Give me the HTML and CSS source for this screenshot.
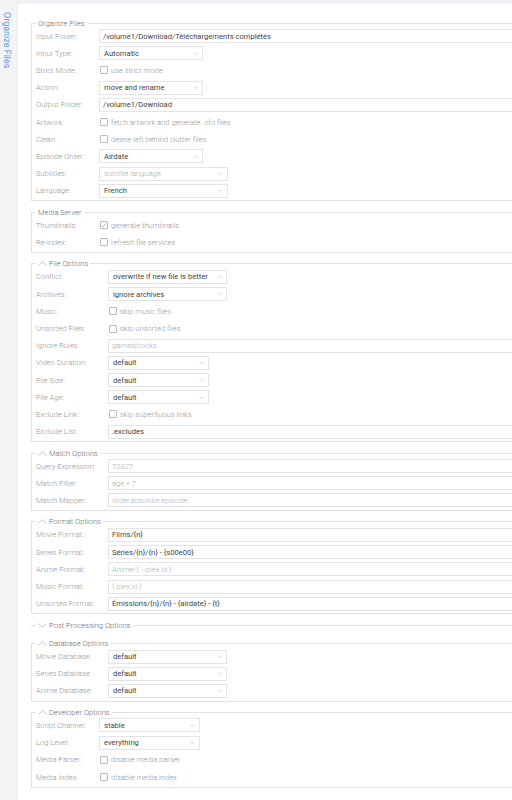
FILE: index.html
```html
<!DOCTYPE html>
<html>
<head>
<meta charset="utf-8">
<title>Organize Files</title>
<link rel="stylesheet" href="styles.css">
</head>
<body>
<div class="app">
  <nav class="side"><span class="tab">Organize Files</span></nav>
  <main class="main">
    <div class="band"></div>
    <div class="content">

      <fieldset class="group">
        <legend>Organize Files</legend>
        <div class="grid c63">
          <span class="lbl">Input Folder:</span><input class="text" value="/volume1/Download/Téléchargements complétés">
          <span class="lbl">Input Type:</span><div class="sel w104"><span>Automatic</span><svg viewBox="0 0 6 4"><polyline points="0.5,0.5 3,3.2 5.5,0.5"/></svg></div>
          <span class="lbl">Strict Mode:</span><div class="chk"><span class="box"></span><span>use strict mode</span></div>
          <span class="lbl">Action:</span><div class="sel w104"><span>move and rename</span><svg viewBox="0 0 6 4"><polyline points="0.5,0.5 3,3.2 5.5,0.5"/></svg></div>
          <span class="lbl">Output Folder:</span><input class="text" value="/volume1/Download">
          <span class="lbl">Artwork:</span><div class="chk"><span class="box"></span><span>fetch artwork and generate .nfo files</span></div>
          <span class="lbl">Clean:</span><div class="chk"><span class="box"></span><span>delete left behind clutter files</span></div>
          <span class="lbl">Episode Order:</span><div class="sel w104"><span>Airdate</span><svg viewBox="0 0 6 4"><polyline points="0.5,0.5 3,3.2 5.5,0.5"/></svg></div>
          <span class="lbl">Subtitles:</span><div class="sel w129"><span class="ph">subtitle language</span><svg viewBox="0 0 6 4"><polyline points="0.5,0.5 3,3.2 5.5,0.5"/></svg></div>
          <span class="lbl">Language:</span><div class="sel w129"><span>French</span><svg viewBox="0 0 6 4"><polyline points="0.5,0.5 3,3.2 5.5,0.5"/></svg></div>
        </div>
      </fieldset>

      <fieldset class="group">
        <legend>Media Server</legend>
        <div class="grid c63">
          <span class="lbl">Thumbnails:</span><div class="chk"><span class="box checked"><svg viewBox="0 0 8 8"><polyline points="1.5,4.2 3.3,6 6.6,1.8"/></svg></span><span>generate thumbnails</span></div>
          <span class="lbl">Re-index:</span><div class="chk"><span class="box"></span><span>refresh file services</span></div>
        </div>
      </fieldset>

      <fieldset class="group">
        <legend><svg class="fold" viewBox="0 0 9 5"><polyline points="0.5,4.5 4.5,0.8 8.5,4.5"/></svg>File Options</legend>
        <div class="grid c72">
          <span class="lbl">Conflict:</span><div class="sel w119"><span>overwrite if new file is better</span><svg viewBox="0 0 6 4"><polyline points="0.5,0.5 3,3.2 5.5,0.5"/></svg></div>
          <span class="lbl">Archives:</span><div class="sel w119"><span>ignore archives</span><svg viewBox="0 0 6 4"><polyline points="0.5,0.5 3,3.2 5.5,0.5"/></svg></div>
          <span class="lbl">Music:</span><div class="chk"><span class="box"></span><span>skip music files</span></div>
          <span class="lbl">Unsorted Files:</span><div class="chk"><span class="box"></span><span>skip unsorted files</span></div>
          <span class="lbl">Ignore Rules:</span><input class="text" placeholder="games|books">
          <span class="lbl">Video Duration:</span><div class="sel w101"><span>default</span><svg viewBox="0 0 6 4"><polyline points="0.5,0.5 3,3.2 5.5,0.5"/></svg></div>
          <span class="lbl">File Size:</span><div class="sel w101"><span>default</span><svg viewBox="0 0 6 4"><polyline points="0.5,0.5 3,3.2 5.5,0.5"/></svg></div>
          <span class="lbl">File Age:</span><div class="sel w101"><span>default</span><svg viewBox="0 0 6 4"><polyline points="0.5,0.5 3,3.2 5.5,0.5"/></svg></div>
          <span class="lbl">Exclude Link:</span><div class="chk"><span class="box"></span><span>skip superfluous links</span></div>
          <span class="lbl">Exclude List:</span><input class="text" value=".excludes">
        </div>
      </fieldset>

      <fieldset class="group">
        <legend><svg class="fold" viewBox="0 0 9 5"><polyline points="0.5,4.5 4.5,0.8 8.5,4.5"/></svg>Match Options</legend>
        <div class="grid c72">
          <span class="lbl">Query Expression:</span><input class="text" placeholder="70327">
          <span class="lbl">Match Filter:</span><input class="text" placeholder="age &lt; 7">
          <span class="lbl">Match Mapper:</span><input class="text" placeholder="order.absolute.episode">
        </div>
      </fieldset>

      <fieldset class="group">
        <legend><svg class="fold" viewBox="0 0 9 5"><polyline points="0.5,4.5 4.5,0.8 8.5,4.5"/></svg>Format Options</legend>
        <div class="grid c72">
          <span class="lbl">Movie Format:</span><input class="text" value="Films/{n}">
          <span class="lbl">Series Format:</span><input class="text" value="Séries/{n}/{n} - {s00e00}">
          <span class="lbl">Anime Format:</span><input class="text" placeholder="Anime/{ ~plex.id }">
          <span class="lbl">Music Format:</span><input class="text" placeholder="{ plex.id }">
          <span class="lbl">Unsorted Format:</span><input class="text" value="Émissions/{n}/{n} - {airdate} - {t}">
        </div>
      </fieldset>

      <fieldset class="group collapsed">
        <legend><svg class="fold" viewBox="0 0 9 5"><polyline points="0.5,0.5 4.5,4.2 8.5,0.5"/></svg>Post Processing Options</legend>
      </fieldset>

      <fieldset class="group">
        <legend><svg class="fold" viewBox="0 0 9 5"><polyline points="0.5,4.5 4.5,0.8 8.5,4.5"/></svg>Database Options</legend>
        <div class="grid c72">
          <span class="lbl">Movie Database:</span><div class="sel w119"><span>default</span><svg viewBox="0 0 6 4"><polyline points="0.5,0.5 3,3.2 5.5,0.5"/></svg></div>
          <span class="lbl">Series Database:</span><div class="sel w119"><span>default</span><svg viewBox="0 0 6 4"><polyline points="0.5,0.5 3,3.2 5.5,0.5"/></svg></div>
          <span class="lbl">Anime Database:</span><div class="sel w119"><span>default</span><svg viewBox="0 0 6 4"><polyline points="0.5,0.5 3,3.2 5.5,0.5"/></svg></div>
        </div>
      </fieldset>

      <fieldset class="group">
        <legend><svg class="fold" viewBox="0 0 9 5"><polyline points="0.5,4.5 4.5,0.8 8.5,4.5"/></svg>Developer Options</legend>
        <div class="grid c63">
          <span class="lbl">Script Channel:</span><div class="sel w101"><span>stable</span><svg viewBox="0 0 6 4"><polyline points="0.5,0.5 3,3.2 5.5,0.5"/></svg></div>
          <span class="lbl">Log Level:</span><div class="sel w101"><span>everything</span><svg viewBox="0 0 6 4"><polyline points="0.5,0.5 3,3.2 5.5,0.5"/></svg></div>
          <span class="lbl">Media Parser:</span><div class="chk"><span class="box"></span><span>disable media parser</span></div>
          <span class="lbl">Media Index:</span><div class="chk"><span class="box"></span><span>disable media index</span></div>
        </div>
      </fieldset>

    </div>
  </main>
</div>
</body>
</html>
```

FILE: styles.css
```css
html, body {
  margin: 0;
  padding: 0;
  overflow: hidden;
  background: #ffffff;
}

body {
  width: 512px;
  height: 800px;
  font-family: Roboto, "Noto Sans", sans-serif;
  font-weight: 300;
  font-size: 7.6px;
  color: #969696;
}

.app {
  display: flex;
  height: 800px;
}

.side {
  width: 17px;
  flex: none;
  background: #f4f4f6;
  border-right: 1px solid #ececf0;
}

.tab {
  display: block;
  writing-mode: vertical-rl;
  color: #5a9dd6;
  font-weight: 400;
  font-size: 9px;
  line-height: 11px;
  margin: 12px 0 0 1px;
  white-space: nowrap;
}

.main {
  flex: 1;
  min-width: 0;
}

.band {
  height: 4px;
  background: #f0f0f5;
}

.content {
  width: 620px;
  padding: 14.5px 0 0 13px;
}

fieldset.group {
  margin: 0 0 6.3px;
  padding: 0 4px 1px;
  border: 1px solid #e2e2e2;
  min-width: 0;
}

fieldset.collapsed {
  border-width: 1px 0 0 0;
  padding-left: 5px;
  margin-bottom: 8.4px;
}

legend {
  padding: 0 2px;
  margin: 0;
  font-size: 7.6px;
  line-height: 9px;
  color: #6a6a6a;
  display: flex;
  align-items: center;
}

.fold {
  width: 9px;
  height: 5px;
  margin-right: 2px;
  fill: none;
  stroke: #b4b4b4;
  stroke-width: 0.8;
}

.grid {
  display: grid;
  grid-auto-rows: 17.2px;
  align-items: center;
}

.c63 { grid-template-columns: 63px 1fr; }
.c72 { grid-template-columns: 72px 1fr; }

.lbl {
  color: #969696;
  white-space: nowrap;
}

.text {
  box-sizing: border-box;
  width: 100%;
  height: 14px;
  margin: 0;
  padding: 0 3px;
  border: 1px solid #e4e4e4;
  border-radius: 0;
  font: inherit;
  font-weight: 400;
  color: #444444;
  background: #fff;
  outline: none;
}

.text::placeholder {
  color: #adadad;
  font-weight: 300;
  opacity: 1;
}

.sel {
  box-sizing: border-box;
  height: 14px;
  padding: 0 4px 0 4px;
  border: 1px solid #e4e4e4;
  color: #444444;
  font-weight: 400;
  display: flex;
  align-items: center;
  justify-content: space-between;
  white-space: nowrap;
}

.sel svg {
  width: 5px;
  height: 3.5px;
  flex: none;
  fill: none;
  stroke: #c2c2c2;
  stroke-width: 0.8;
}

.sel .ph { color: #adadad; font-weight: 300; }

.w101 { width: 101px; }
.w104 { width: 104px; }
.w119 { width: 119px; }
.w129 { width: 129px; }

.chk {
  display: flex;
  align-items: center;
  color: #969696;
  white-space: nowrap;
}

.box {
  box-sizing: border-box;
  width: 8px;
  height: 8px;
  margin: 0 3px 0 1px;
  border: 1px solid #b9b9b9;
  border-radius: 1px;
  display: flex;
  align-items: center;
  justify-content: center;
}

.box svg {
  width: 6px;
  height: 6px;
  fill: none;
  stroke: #8a8a8a;
  stroke-width: 0.9;
}
```
